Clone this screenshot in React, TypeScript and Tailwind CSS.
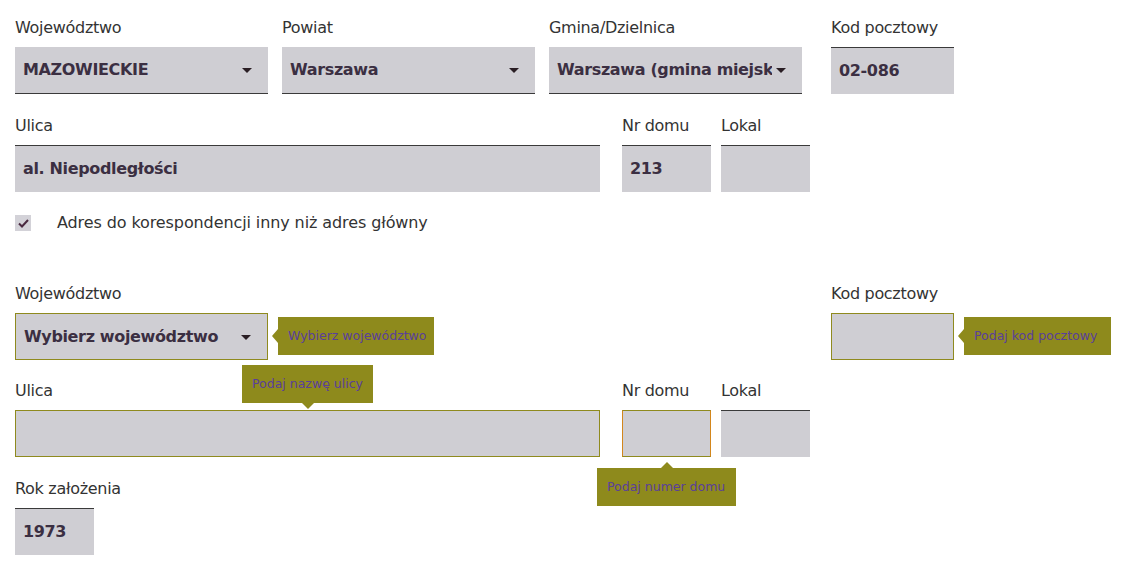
import React from "react";

const font = { fontFamily: '"DejaVu Sans", Verdana, sans-serif' };

function Caret() {
  return (
    <svg className="absolute right-[16px] top-[21px]" width="10" height="5" viewBox="0 0 10 5">
      <polygon points="0,0 10,0 5,5" fill="#2a1e24" />
    </svg>
  );
}

function Label({ children }: { children: React.ReactNode }) {
  return (
    <div className="h-[20px] leading-[20px] text-[16px] text-[#333] mb-[9px] whitespace-nowrap tracking-[-0.3px]">
      {children}
    </div>
  );
}

function Box({
  w,
  value,
  select,
  variant = "top",
}: {
  w: string;
  value?: string;
  select?: boolean;
  variant?: "top" | "bottom" | "invalid" | "invalidOrange";
}) {
  const border =
    variant === "top"
      ? "border-t border-t-[#3a3a3a]"
      : variant === "bottom"
      ? "border-b border-b-[#3a3a3a]"
      : variant === "invalid"
      ? "border border-[#8f8a1e]"
      : "border border-y-[#8f8a1e] border-x-[#d3861c]";
  return (
    <div className={`relative h-[47px] bg-[#cfced3] ${w} ${border} overflow-hidden`}>
      {value && (
        <div
          className={`absolute left-[8px] top-0 bottom-0 flex items-center font-bold text-[16px] tracking-[-0.35px] text-[#3b2f42] whitespace-nowrap overflow-hidden ${
            select ? "right-[30px]" : "right-[4px]"
          }`}
        >
          {value}
        </div>
      )}
      {select && <Caret />}
    </div>
  );
}

function Tip({
  children,
  className,
  arrow,
}: {
  children: React.ReactNode;
  className: string;
  arrow: "left" | "down" | "up";
}) {
  return (
    <div
      className={`absolute h-[38px] bg-[#8e8a1c] flex items-center px-[10px] text-[12.5px] text-[#5a3f9a] whitespace-nowrap z-10 ${className}`}
    >
      {children}
      {arrow === "left" && (
        <span className="absolute left-[-6px] top-[12px] w-0 h-0 border-y-[7px] border-y-transparent border-r-[6px] border-r-[#8e8a1c]" />
      )}
      {arrow === "down" && (
        <span className="absolute bottom-[-6px] left-1/2 -ml-[6px] w-0 h-0 border-x-[6px] border-x-transparent border-t-[6px] border-t-[#8e8a1c]" />
      )}
      {arrow === "up" && (
        <span className="absolute top-[-6px] left-1/2 -ml-[6px] w-0 h-0 border-x-[6px] border-x-transparent border-b-[6px] border-b-[#8e8a1c]" />
      )}
    </div>
  );
}

export default function App() {
  return (
    <div className="w-[1128px] h-[568px] bg-white overflow-hidden pl-[15px] pt-[18px]" style={font}>
      {/* Section 1 row 1 */}
      <div className="flex">
        <div className="w-[253px]">
          <Label>Województwo</Label>
          <Box w="w-[253px]" value="MAZOWIECKIE" select variant="bottom" />
        </div>
        <div className="w-[253px] ml-[14px]">
          <Label>Powiat</Label>
          <Box w="w-[253px]" value="Warszawa" select variant="bottom" />
        </div>
        <div className="w-[253px] ml-[14px]">
          <Label>Gmina/Dzielnica</Label>
          <Box w="w-[253px]" value="Warszawa (gmina miejska)" select variant="bottom" />
        </div>
        <div className="w-[123px] ml-[29px]">
          <Label>Kod pocztowy</Label>
          <Box w="w-[123px]" value="02-086" variant="top" />
        </div>
      </div>

      {/* Section 1 row 2 */}
      <div className="flex mt-[22px]">
        <div className="w-[585px]">
          <Label>Ulica</Label>
          <Box w="w-[585px]" value="al. Niepodległości" variant="top" />
        </div>
        <div className="w-[89px] ml-[22px]">
          <Label>Nr domu</Label>
          <Box w="w-[89px]" value="213" variant="top" />
        </div>
        <div className="w-[89px] ml-[10px]">
          <Label>Lokal</Label>
          <Box w="w-[89px]" variant="top" />
        </div>
      </div>

      {/* Checkbox */}
      <div className="flex items-center h-[20px] mt-[21px]">
        <div className="w-[16px] h-[16px] bg-[#d3d2d8] flex items-center justify-center">
          <svg width="11" height="9" viewBox="0 0 11 9">
            <path d="M1 4.5 L4 7.5 L10 1" stroke="#4a2a40" strokeWidth="2" fill="none" />
          </svg>
        </div>
        <span className="ml-[26px] text-[16px] text-[#333] tracking-[-0.1px]">
          Adres do korespondencji inny niż adres główny
        </span>
      </div>

      {/* Section 2 row 1 */}
      <div className="flex mt-[51px]">
        <div className="w-[253px] relative">
          <Label>Województwo</Label>
          <Box w="w-[253px]" value="Wybierz województwo" select variant="invalid" />
          <Tip className="left-[263px] top-[33px] w-[156px]" arrow="left">
            Wybierz województwo
          </Tip>
        </div>
        <div className="w-[123px] ml-[563px] relative">
          <Label>Kod pocztowy</Label>
          <Box w="w-[123px]" variant="invalid" />
          <Tip className="left-[133px] top-[33px] w-[147px]" arrow="left">
            Podaj kod pocztowy
          </Tip>
        </div>
      </div>

      {/* Section 2 row 2 */}
      <div className="flex mt-[21px]">
        <div className="w-[585px] relative">
          <Label>Ulica</Label>
          <Box w="w-[585px]" variant="invalid" />
          <Tip className="left-[227px] top-[-16px] w-[131px]" arrow="down">
            Podaj nazwę ulicy
          </Tip>
        </div>
        <div className="w-[89px] ml-[22px] relative">
          <Label>Nr domu</Label>
          <Box w="w-[89px]" variant="invalidOrange" />
          <Tip className="left-[-25px] top-[87px] w-[139px]" arrow="up">
            Podaj numer domu
          </Tip>
        </div>
        <div className="w-[89px] ml-[10px]">
          <Label>Lokal</Label>
          <Box w="w-[89px]" variant="top" />
        </div>
      </div>

      {/* Rok */}
      <div className="flex mt-[22px]">
        <div className="w-[79px]">
          <Label>Rok założenia</Label>
          <Box w="w-[79px]" value="1973" variant="top" />
        </div>
      </div>
    </div>
  );
}
